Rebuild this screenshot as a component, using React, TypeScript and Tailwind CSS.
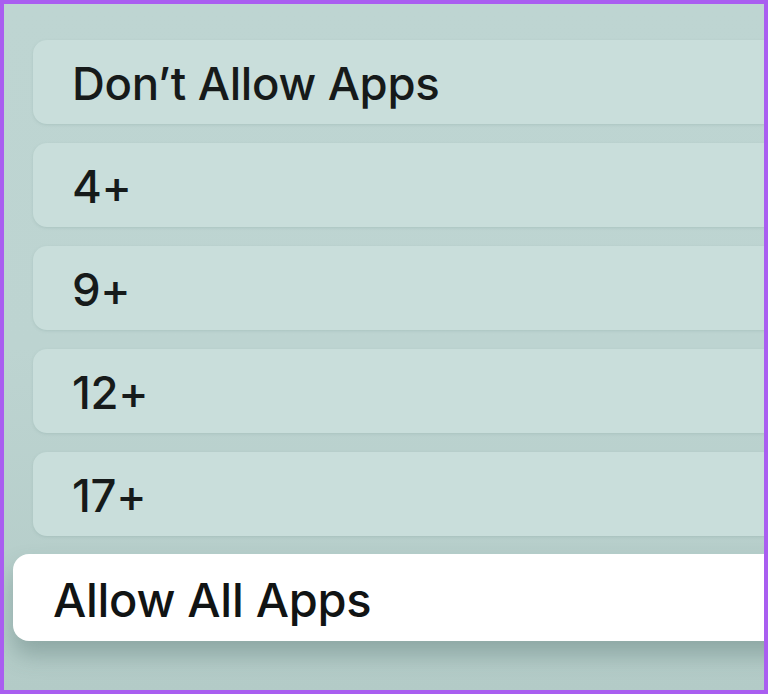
const ratings = ["Don’t Allow Apps", "4+", "9+", "12+", "17+"];

function RatingRow({ label }: { label: string }) {
  return (
    <div className="h-[84px] w-[calc(100%+40px)] shrink-0 rounded-[14px] bg-[#c9dedb] flex items-center pl-[39px] shadow-[0_1px_3px_rgba(120,150,146,0.25)]">
      <span className="text-[45.5px] font-medium leading-none text-[#161a1a] tracking-[-0.3px] pt-[3px]">{label}</span>
    </div>
  );
}

export default function App() {
  return (
    <div
      className="w-[768px] h-[694px] border-[4px] border-[#a95ef0] overflow-hidden bg-gradient-to-b from-[#bed5d2] via-[#bdd4d1] to-[#b3cbc7]"
      style={{ fontFamily: "Inter, 'Noto Sans', sans-serif" }}
    >
      <div className="flex flex-col gap-[19px] pt-[36px] pl-[29px]">
        {ratings.map((r) => (
          <RatingRow key={r} label={r} />
        ))}

        {/* focused row, slightly larger and lifted */}
        <div className="-ml-[20px] -mt-[1px] h-[87px] w-[calc(100%+60px)] shrink-0 rounded-[16px] bg-white flex items-center pl-[40px] shadow-[0_14px_22px_rgba(70,100,96,0.35)]">
          <span className="text-[47px] font-medium leading-none text-[#111414] tracking-[-0.3px] pt-[3px]">Allow All Apps</span>
        </div>
      </div>
    </div>
  );
}
